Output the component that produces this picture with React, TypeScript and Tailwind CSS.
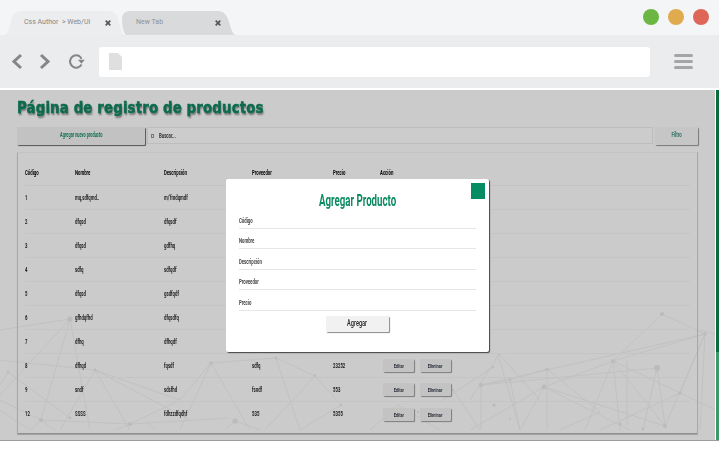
import React from "react";

const rows = [
  ["1", "mq,sdfqmd..", "m/'fmdqmdf", "", "", false],
  ["2", "dfqsd", "dfqsdf", "", "", false],
  ["3", "dfqsd", "gdfhq", "", "", false],
  ["4", "sdfq", "sdfqdf", "", "", false],
  ["5", "dfqsd", "gsdfqdf", "", "", false],
  ["6", "gfhdqfhd", "dfqsdfq", "", "", false],
  ["7", "dfhq", "dfhqdf", "", "", false],
  ["8", "dfhqd", "fqsdf", "sdfq", "23252", true],
  ["9", "sndf", "sdsfhd", "fsndf", "553", true],
  ["12", "SSSS", "fdhzzdfqdhf", "535", "5355", true],
] as const;

const fields = ["Código", "Nombre", "Descripción", "Proveedor", "Precio"];

const lines: [number, number, number, number][] = [
  [70, 319, 41, 420], [70, 319, 90, 430], [70, 319, 0, 395], [0, 360, 95, 370], [0, 400, 41, 420], [41, 420, 130, 424],
  [8, 372, 70, 418], [8, 372, 0, 385], [95, 370, 130, 430], [95, 370, 60, 430], [95, 370, 180, 400], [180, 400, 211, 363],
  [211, 363, 276, 358], [211, 363, 250, 430], [211, 363, 180, 430], [276, 358, 315, 376], [315, 376, 265, 430], [315, 376, 341, 405],
  [95, 370, 190, 420], [276, 358, 300, 430], [130, 424, 230, 418], [341, 405, 300, 430], [235, 421, 225, 430], [235, 421, 260, 430],
  [145, 420, 155, 430], [41, 420, 30, 430], [41, 420, 55, 430], [130, 424, 115, 430], [498, 354, 520, 430],
  [0, 410, 30, 430], [130, 424, 180, 400], [0, 330, 70, 319],
  [662, 314, 705, 334], [705, 334, 481, 385], [705, 334, 613, 361], [662, 314, 613, 361], [613, 361, 544, 387], [613, 361, 665, 426],
  [613, 361, 620, 430], [613, 361, 585, 430], [613, 361, 720, 412], [657, 368, 481, 385], [657, 368, 665, 426], [657, 368, 643, 430],
  [705, 334, 665, 426], [705, 334, 680, 393], [680, 393, 600, 430], [544, 387, 520, 430], [544, 387, 470, 430], [544, 387, 630, 430],
  [544, 387, 665, 426], [481, 385, 481, 430], [481, 385, 510, 380], [510, 380, 547, 369], [547, 369, 600, 412], [547, 369, 547, 430],
  [499, 354, 470, 400], [499, 354, 540, 400], [510, 380, 520, 430], [493, 367, 440, 402], [398, 405, 370, 430], [398, 405, 440, 430],
  [453, 390, 480, 430], [700, 330, 719, 335], [627, 425, 627, 361], [705, 334, 700, 430], [600, 412, 560, 430],
];

const nodes: [number, number, number][] = [
  [70, 319, 2.6], [41, 420, 2], [8, 372, 1.2], [95, 370, 1.4], [70, 418, 1.4], [130, 424, 2], [211, 363, 1.8], [276, 358, 1.6],
  [315, 376, 1.4], [341, 405, 1.2], [235, 421, 2.6], [185, 416, 1.2],
  [662, 314, 2], [705, 334, 1.8], [613, 361, 2], [657, 368, 3], [481, 385, 2.2], [544, 387, 2.4], [547, 369, 1.6], [510, 380, 1.2],
  [665, 426, 2], [680, 393, 1.6], [493, 367, 1.2], [499, 354, 1], [453, 390, 1.2], [418, 412, 1.2], [620, 424, 1.6], [643, 429, 1.4],
  [494, 405, 1.6], [510, 419, 1],
];

function Mini({ children, className = "" }: { children?: React.ReactNode; className?: string }) {
  return (
    <span className={`inline-block origin-left scale-x-[.66] whitespace-nowrap font-['Roboto',sans-serif] text-[6.5px] font-bold leading-[8px] blur-[.25px] ${className || "text-[#1c1c1c]"}`}>
      {children}
    </span>
  );
}

function RowButton({ label }: { label: string }) {
  return (
    <span className="flex h-[13px] w-[31px] items-center justify-center rounded-[1px] bg-[#c3c3c3] shadow-[1px_1px_1px_#7d7d7d]">
      <span className="scale-x-[.66] whitespace-nowrap font-['Roboto',sans-serif] text-[6px] font-bold text-[#2a3038] blur-[.2px]">{label}</span>
    </span>
  );
}

function Tab({ title, first }: { title: string; first?: boolean }) {
  return (
    <div className={`relative flex h-[25px] items-center ${first ? "z-10 w-[122px] pl-[21px]" : "-ml-[4px] w-[115px] pl-[15px]"}`}>
      <svg className="absolute inset-0 h-full w-full" viewBox={first ? "0 0 122 25" : "0 0 115 25"}>
        {first ? (
          <path d="M0 25C5 25 6 19 8 11 10 4 12 1 19 1H105C112 1 114 4 116 12 118 19 119 25 122 25Z" fill="#ecedee" />
        ) : (
          <path d="M5 25C2 22 1 15 1 9 1 4 4 1 9 1H97C103 1 106 5 108 12 110 19 112 25 115 25Z" fill="#d9dadc" />
        )}
      </svg>
      <span className={`relative whitespace-pre font-['Roboto',sans-serif] text-[7px] ${first ? "text-[#85878a]" : "text-[#8f9194]"}`}>{title}</span>
      <svg className={`absolute top-[10px] h-[6px] w-[6px] ${first ? "left-[102px]" : "left-[94px]"}`} viewBox="0 0 6 6">
        <path d="M.7.7 5.3 5.3M5.3.7.7 5.3" stroke="#55575a" strokeWidth="1.7" />
      </svg>
    </div>
  );
}

export default function App() {
  return (
    <div className="relative h-[450px] w-[719px] overflow-hidden bg-white">
      <div className="h-[35px] bg-[#f4f5f7] pt-[10px]">
        <div className="flex items-start justify-between pr-[10px]">
          <div className="flex pl-[3px]">
            <Tab title="Css Author  > Web/Ui" first />
            <Tab title="New Tab" />
          </div>
          <div className="-mt-[1px] flex gap-[9px]">
            <span className="h-[16px] w-[16px] rounded-full bg-[#6cb644]" />
            <span className="h-[16px] w-[16px] rounded-full bg-[#e0aa4e]" />
            <span className="h-[16px] w-[16px] rounded-full bg-[#de6659]" />
          </div>
        </div>
      </div>

      <div className="flex h-[53px] items-center bg-[#ebeced] pl-[11px] pr-[26px]">
        <svg className="h-[17px] w-[12px]" viewBox="0 0 12 17">
          <path d="M10 2 3 8.5 10 15" fill="none" stroke="#85868a" strokeWidth="3" />
        </svg>
        <svg className="ml-[16px] h-[17px] w-[12px]" viewBox="0 0 12 17">
          <path d="M2 2 9 8.5 2 15" fill="none" stroke="#85868a" strokeWidth="3" />
        </svg>
        <svg className="ml-[17px] h-[17px] w-[17px]" viewBox="0 0 17 17">
          <path d="M13.6 11.6A6.2 6.2 0 1 1 11.2 3 6.2 6.2 0 0 1 13.4 5.8" fill="none" stroke="#85868a" strokeWidth="2" />
          <path d="M10 6.8H16.8L13.4 10.8Z" fill="#85868a" />
        </svg>
        <div className="ml-[14px] flex h-[30px] w-[551px] items-center rounded-[3px] bg-white pl-[10px]">
          <svg className="h-[17px] w-[13px]" viewBox="0 0 13 17">
            <path d="M0 0H9L13 4V17H0Z" fill="#dfdfdf" />
          </svg>
        </div>
        <div className="ml-[24px] flex w-[19px] flex-col gap-[3px]">
          <span className="h-[3px] rounded-[2px] bg-[#a5a5a5]" />
          <span className="h-[3px] rounded-[2px] bg-[#a5a5a5]" />
          <span className="h-[3px] rounded-[2px] bg-[#a5a5a5]" />
        </div>
      </div>

      <div className="relative mt-[2px] flex h-[350px] bg-[#cbcbcb]">
        <svg className="absolute left-0 top-0 h-[350px] w-[719px]" viewBox="0 90 719 350">
          {lines.map(([a, b, c, d], i) => (
            <line key={i} x1={a} y1={b} x2={c} y2={d} stroke="#bfbfbf" strokeWidth=".8" />
          ))}
          {nodes.map(([x, y, r], i) => (
            <circle key={i} cx={x} cy={y} r={r} fill="#bbbbbb" />
          ))}
        </svg>

        <main className="relative flex-1 pl-[17px] pr-[17px] pt-[8px]">
          <h1 className="h-[20px] origin-left scale-x-[.81] whitespace-nowrap font-['DejaVu_Sans',sans-serif] text-[16.5px] font-bold leading-[20px] tracking-[.15px] text-[#0b6b4c] [-webkit-text-stroke:0.5px_#0b6b4c] [text-shadow:1px_2px_2px_#00000075]">
            Página de registro de productos
          </h1>

          <div className="mt-[9px] flex h-[18px] gap-[2px]">
            <button className="flex h-[18px] w-[128px] items-center justify-center rounded-[1px] bg-[#c2c2c2] shadow-[1px_1px_1px_#555]">
              <span className="scale-x-[.6] whitespace-nowrap font-['Roboto',sans-serif] text-[6.5px] font-bold text-[#0f6f52] blur-[.2px]">Agregar nuevo producto</span>
            </button>
            <div className="flex h-[17px] flex-1 items-center border border-[#bdbdbd] bg-[#cccccc] pl-[3px]">
              <span className="h-[4px] w-[3px] border border-[#777]" />
              <Mini className="ml-[5px] text-[#333]">Buscar...</Mini>
            </div>
            <button className="flex h-[18px] w-[43px] items-center justify-center rounded-[1px] bg-[#c6c6c6] shadow-[1px_1px_1px_#777]">
              <span className="scale-x-[.66] whitespace-nowrap font-['Roboto',sans-serif] text-[6.5px] font-bold text-[#2f6f60] blur-[.2px]">Filtro</span>
            </button>
          </div>

          <section className="mt-[7px] h-[282px] rounded-[1px] border-x border-b border-t border-x-[#a8a8a8] border-b-[#8f8f8f] border-t-[#c4c4c4] px-[7px] pt-[7px] shadow-[0_1px_1px_#a0a0a0]">
            <div className="grid h-[26px] grid-cols-[50px_89px_88px_81px_47px_1fr] items-center border-b border-[#c3c3c3]">
              {["Código", "Nombre", "Descripción", "Proveedor", "Precio", "Acción"].map((h) => (
                <Mini key={h} className="text-[#000]">{h}</Mini>
              ))}
            </div>
            {rows.map((r) => (
              <div key={r[0]} className="grid h-[24px] grid-cols-[50px_89px_88px_81px_47px_1fr] items-center border-b border-[#c4c4c4] last:border-b-0">
                <Mini>{r[0]}</Mini>
                <Mini>{r[1]}</Mini>
                <Mini>{r[2]}</Mini>
                <Mini>{r[3]}</Mini>
                <Mini>{r[4]}</Mini>
                {r[5] ? (
                  <div className="ml-[3px] flex gap-[6px]">
                    <RowButton label="Editar" />
                    <RowButton label="Eliminar" />
                  </div>
                ) : (
                  <span />
                )}
              </div>
            ))}
          </section>

          <div className="absolute left-[226px] top-[89px] h-[173px] w-[263px] rounded-[2px] bg-white px-[13px] pt-[13px] shadow-[1px_1px_1px_#444]">
            <span className="absolute right-[4px] top-[4px] h-[16px] w-[14px] bg-[#058c63]" />
            <h2 className="flex h-[18px] items-center justify-center">
              <span className="scale-x-[.57] whitespace-nowrap font-['Roboto',sans-serif] text-[17px] font-bold text-[#0a8a62]">Agregar Producto</span>
            </h2>
            <div className="-mt-[2px] flex flex-col">
              {fields.map((f) => (
                <div key={f} className="flex h-[20.6px] items-end border-b border-[#e6e6e6] pb-[3px]">
                  <Mini className="text-[#444]">{f}</Mini>
                </div>
              ))}
            </div>
            <div className="mt-[5px] flex justify-center">
              <button className="flex h-[16px] w-[63px] items-center justify-center rounded-[1px] bg-[#f1f1f1] shadow-[1px_1px_1px_#8a8a8a]">
                <span className="scale-x-[.62] font-['Roboto',sans-serif] text-[9px] font-medium text-[#222]">Agregar</span>
              </button>
            </div>
          </div>
        </main>

        <div className="relative flex w-[4px] flex-col border-l border-white">
          <span className="h-[262px] bg-[#0a6b3c]" />
          <span className="flex-1 bg-[#3d9a68]" />
        </div>
      </div>
      <div className="h-[1px] bg-[#9c9c9c]" />
    </div>
  );
}
